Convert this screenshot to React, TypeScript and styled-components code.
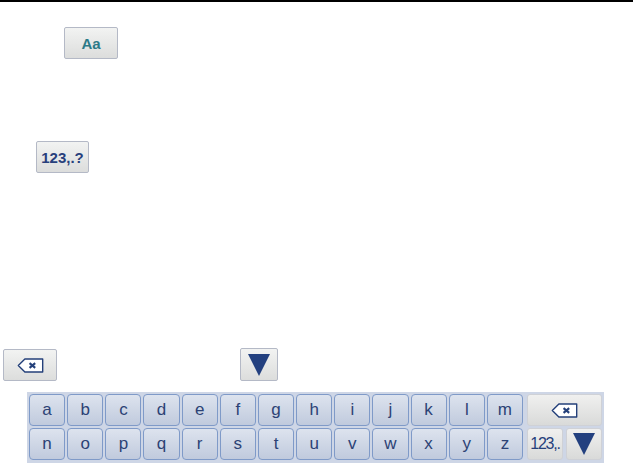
import styled, { createGlobalStyle } from 'styled-components';

const GlobalStyle = createGlobalStyle`
  html, body {
    margin: 0;
    padding: 0;
    background: #ffffff;
  }
`;

const row1 = ['a', 'b', 'c', 'd', 'e', 'f', 'g', 'h', 'i', 'j', 'k', 'l', 'm'];
const row2 = ['n', 'o', 'p', 'q', 'r', 's', 't', 'u', 'v', 'w', 'x', 'y', 'z'];

const BackspaceIcon = ({ width, height }: { width: number; height: number }) => (
  <svg width={width} height={height} viewBox="0 0 28 16" fill="none">
    <path d="M8 1 H27 V15 H8 L1 8 Z" fill="#ffffff" stroke="#24407a" strokeWidth="1.5" strokeLinejoin="round" />
    <path d="M13 5.5 L19 10.5 M19 5.5 L13 10.5" stroke="#24407a" strokeWidth="2.2" />
  </svg>
);

const DownIcon = ({ width, height }: { width: number; height: number }) => (
  <svg width={width} height={height} viewBox="0 0 26 26">
    <path d="M0 0 H26 L13 26 Z" fill="#23407f" />
  </svg>
);

const App = () => {
  return (
    <Page>
      <GlobalStyle />
      <TopRule />
      <AaButton>Aa</AaButton>
      <SymbolButton>123,.?</SymbolButton>
      <ControlRow>
        <EraseButton>
          <BackspaceIcon width={27} height={15} />
        </EraseButton>
        <HideButton>
          <DownIcon width={26} height={22} />
        </HideButton>
      </ControlRow>
      <Keyboard>
        <Letters>
          {[...row1, ...row2].map((letter) => (
            <LetterKey key={letter}>{letter}</LetterKey>
          ))}
        </Letters>
        <SideKeys>
          <WideKey>
            <BackspaceIcon width={27} height={15} />
          </WideKey>
          <SideKey>
            <NumLabel>123,.</NumLabel>
          </SideKey>
          <SideKey>
            <DownIcon width={26} height={22} />
          </SideKey>
        </SideKeys>
      </Keyboard>
    </Page>
  );
};
export default App;

const Page = styled.main`
  width: 633px;
  height: 463px;
  display: flex;
  flex-direction: column;
  overflow: hidden;
  font-family: 'Liberation Sans', Arial, sans-serif;
`;

const TopRule = styled.div`
  height: 2px;
  background-color: #000000;
`;

const GreyButton = styled.div`
  box-sizing: border-box;
  display: flex;
  align-items: center;
  justify-content: center;
  height: 32px;
  border: 1px solid #b4b9c6;
  border-radius: 2px;
  background: linear-gradient(#f2f3f2, #dcdddc);
`;

const AaButton = styled(GreyButton)`
  width: 54px;
  margin: 25px 0 0 64px;
  font-size: 15px;
  font-weight: 700;
  color: #2c7a88;
`;

const SymbolButton = styled(GreyButton)`
  width: 53px;
  margin: 82px 0 0 36px;
  font-size: 15px;
  font-weight: 700;
  color: #28407c;
`;

const ControlRow = styled.div`
  display: flex;
  align-items: flex-end;
  margin: 175px 0 0 3px;
`;

const EraseButton = styled(GreyButton)`
  width: 54px;
`;

const HideButton = styled(GreyButton)`
  width: 38px;
  height: 33px;
  margin-left: 183px;
`;

const Keyboard = styled.div`
  box-sizing: border-box;
  display: flex;
  gap: 4px;
  width: 577px;
  height: 71px;
  margin: 11px 0 0 27px;
  padding: 2px 2px 3px 2px;
  background-color: #ced6e6;
`;

const Letters = styled.div`
  width: 494px;
  display: grid;
  grid-template-columns: repeat(13, 1fr);
  grid-auto-rows: 32px;
  gap: 2px;
`;

const LetterKey = styled.div`
  box-sizing: border-box;
  display: flex;
  align-items: center;
  justify-content: center;
  border: 1px solid #7f9ac8;
  border-radius: 4px;
  background: linear-gradient(#dde3ee, #c0cadd);
  font-size: 17px;
  color: #2c4275;
`;

const SideKeys = styled.div`
  width: 75px;
  display: grid;
  grid-template-columns: 36px 36px;
  grid-auto-rows: 32px;
  gap: 2px 3px;
`;

const SideKey = styled.div`
  box-sizing: border-box;
  display: flex;
  align-items: center;
  justify-content: center;
  border: 1px solid #cfd1d6;
  border-radius: 3px;
  background: linear-gradient(#f0f0ef, #d9dad9);
  overflow: hidden;
`;

const WideKey = styled(SideKey)`
  grid-column: 1 / 3;
`;

const NumLabel = styled.span`
  font-size: 16px;
  letter-spacing: -1.2px;
  color: #26407c;
`;
